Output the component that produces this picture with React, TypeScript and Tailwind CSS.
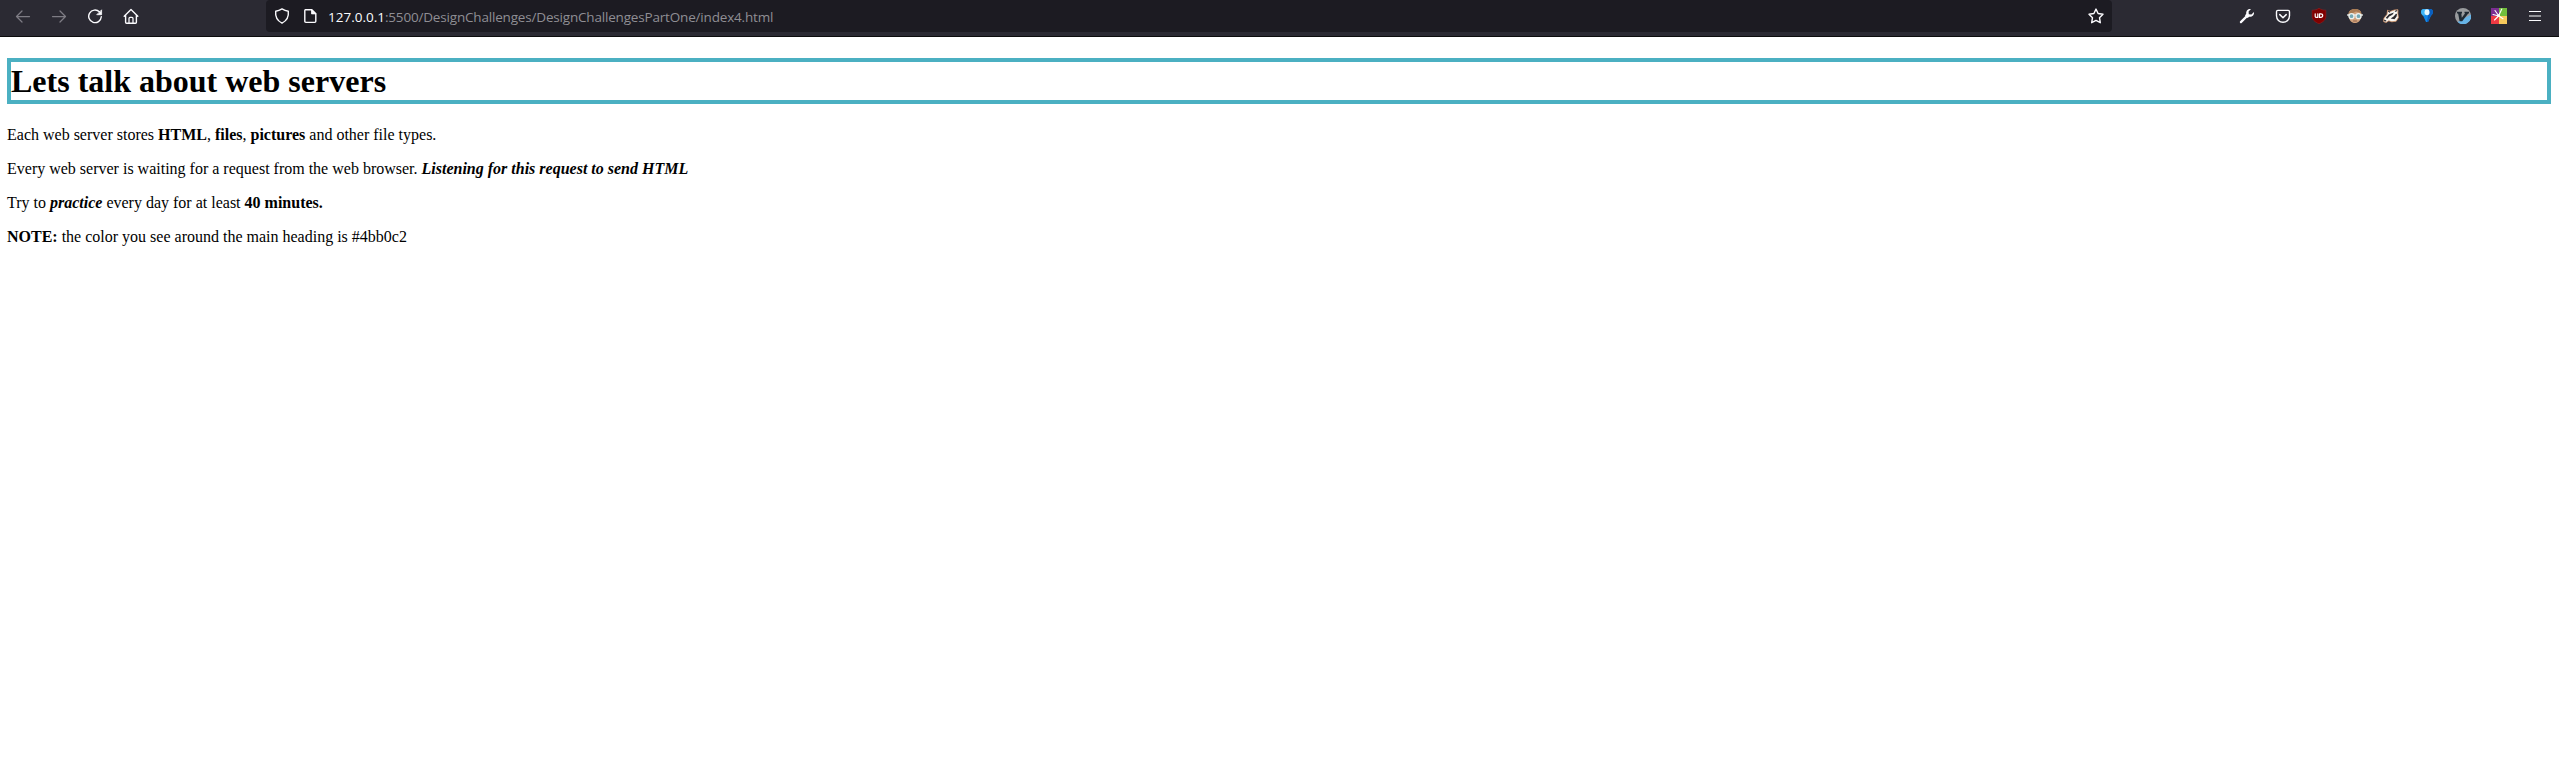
import type { ReactNode } from "react";

function Icon({ children, className = "" }: { children: ReactNode; className?: string }) {
  return (
    <svg
      viewBox="0 0 16 16"
      className={`size-4 shrink-0 ${className}`}
      fill="none"
      stroke="currentColor"
      strokeWidth="1.25"
      strokeLinecap="round"
      strokeLinejoin="round"
    >
      {children}
    </svg>
  );
}

function Navigation() {
  return (
    <div className="flex w-[266px] shrink-0 items-center gap-5 pl-[15px] text-[#fbfbfe]">
      <Icon className="text-[#7e7c84]"><path d="M14.5 8.5H1.5M7 3 1.5 8.5 7 14" /></Icon>
      <Icon className="text-[#7e7c84]"><path d="M1.5 8.5h13M9 3l5.5 5.5L9 14" /></Icon>
      <Icon>
        <path d="M12.4 3.8A6.3 6.3 0 1 0 14.3 8.8" strokeWidth="1.4" />
        <path d="M14.6 2.2v4.5h-4.5z" fill="currentColor" strokeWidth="0.8" />
      </Icon>
      <Icon>
        <path d="M1.2 8.2 8 1.6l6.8 6.6M2.6 7v7.3q0 .9.9.9h9q.9 0 .9-.9V7" strokeWidth="1.4" />
        <path d="M6 14.8V10.4q0-1 1-1h2q1 0 1 1v4.4" />
      </Icon>
    </div>
  );
}

function AddressBar() {
  return (
    <div className="flex h-8 w-[1846px] shrink-0 items-center rounded bg-[#1c1b22] px-2 text-[#fbfbfe]">
      <Icon><path d="M8 .9Q11 2.8 14.3 3.2C14.9 8.5 12.8 12.8 8 15.2 3.2 12.8 1.1 8.5 1.7 3.2Q5 2.8 8 .9z" strokeWidth="1.4" /></Icon>
      <Icon className="ml-3">
        <path d="M3.4 1.7h6.4l4 4v7.6q0 1.1-1.1 1.1H3.9q-1.1 0-1.1-1.1V2.8q0-1.1.6-1.1z" strokeWidth="1.4" />
        <path d="M9.5 1.7v4.2h4.2z" fill="currentColor" strokeWidth="0.8" />
      </Icon>
      <span className="ml-2.5 mt-px whitespace-nowrap font-['Open_Sans',sans-serif] text-[13.5px] leading-5">
        127.0.0.1<span className="tracking-[-0.18px] text-[#8f8e94]">:5500/DesignChallenges/DesignChallengesPartOne/index4.html</span>
      </span>
      <Icon className="ml-auto">
        <path d="m8 1.1 2.1 4.4 4.9.7-3.5 3.5.8 5L8 12.4l-4.3 2.3.8-5L1 6.2l4.9-.7z" strokeWidth="1.4" />
      </Icon>
    </div>
  );
}

function Extensions() {
  return (
    <div className="ml-auto flex items-center gap-5 pr-4 text-[#fbfbfe]">
      <Icon>
        <path d="m1.9 14.1 6-6" strokeWidth="2.2" />
        <path d="M12 1C9 .6 6.8 2.8 7.2 5.7L6 7.4l2.6 2.6 1.7-1.2c2.9.4 5.1-1.8 4.7-4.8L12.4 6.4 9.8 6.2l-.2-2.6z" fill="currentColor" stroke="none" />
      </Icon>
      <Icon>
        <path d="M2.8 2.4h10.4q1.3 0 1.3 1.3v4.1a6.5 6.5 0 0 1-13 0V3.7q0-1.3 1.3-1.3z" strokeWidth="1.4" />
        <path d="M4.8 6.6 8 9.7l3.2-3.1" strokeWidth="1.5" />
      </Icon>
      <Icon>
        <path d="M8 .2c2 1.4 4.2 2 6.9 2V8c0 3.6-2.4 5.8-6.9 7.8C3.5 13.8 1.1 11.6 1.1 8V2.2c2.7 0 4.9-.6 6.9-2z" fill="#800000" stroke="#9d2020" strokeWidth=".5" />
        <path d="M4.2 5.8v2.6q0 1 1.6 1h1V5.8M8.5 5.8h1.2q2 0 2 1.8t-2 1.8H8.5z" stroke="#fff" strokeWidth="1.2" />
      </Icon>
      <Icon>
        <path d="M1.6 8C.8 3.4 3.6.9 8 .9s7.2 2.5 6.4 7.1c-.6 4.4-3 7-6.4 7S2.200 12.400 1.600 8z" fill="#d0a17b" stroke="none" />
        <path d="M1.5 7C1.500 3 4 .9 8 .9S14.500 3 14.500 7L12.500 4.500 9 3.500 6 5z" fill="#a97b53" stroke="none" />
        <path d="M.5 7h15" stroke="#dce2df" strokeWidth="1.500" />
        <circle cx="4.5" cy="8.2" r="2.500" fill="#74a8b4" stroke="#eef2ef" strokeWidth="1.300" />
        <circle cx="11.500" cy="8.2" r="2.500" fill="#74a8b4" stroke="#eef2ef" strokeWidth="1.300" />
        <path d="M6.500 13h3" stroke="#82503d" strokeWidth=".8" />
      </Icon>
      <Icon>
        <path d="M.6 13.200 1 10 4 6.400 4.600 2.200 7.300 3.400l4-1.400L15 1.800l-.2 3.400.6 4.400-2.200 3.600-4.400.6-3-1-2.600 1.600z" fill="#faf7f3" stroke="#d59668" strokeWidth=".8" />
        <path d="M2.600 10 6 6.200l5-1.600-1.600 2.200-3.200 1.700-1.700 2.200z" fill="#2b292d" stroke="none" />
        <path d="m7.600 10.600 3-2.100 2.400-2.800 1 .2-.4 2.600-2.100 2.700z" fill="#2b292d" stroke="none" />
        <path d="m5.600 3.200 1 .8M12.400 3.200l1.400-.5M1.400 12.300l1.300.6" stroke="#2b292d" strokeWidth="1.200" />
      </Icon>
      <Icon>
        <path d="M2 4Q2.200 1 5 1h6q2.800 0 3 3 0 2-2.200 4L9 14H7L4.200 8Q2 6 2 4z" fill="#1286e6" stroke="none" />
        <path d="M2 4Q2.200 1 5 1h2.500L6 7.500H3.900Q2 6 2 4z" fill="#3eb5f7" stroke="none" />
        <path d="M10 1h1q2.800 0 3 3 0 2-2.200 4L9 14H8z" fill="#0a5fc0" stroke="none" />
        <ellipse cx="8" cy="4.200" rx="2.500" ry="3" fill="#e6f8ff" stroke="none" />
      </Icon>
      <Icon>
        <circle cx="8" cy="8" r="8" fill="#999b9e" stroke="none" />
        <path d="M16 6.500A8 8 0 0 1 2.600 13.900z" fill="#67b3e6" stroke="none" />
        <path d="M2 3.800h5v1.500l-.7.4.5 4 3.200-4.300-.5-.4V3.800H14v1.400l-1 .5-5.800 7.600H4.600L3.200 5.800 2 5.300z" fill="#202a34" stroke="none" />
      </Icon>
      <Icon>
        <path d="M0 0h8v8H0z" fill="#7b2f91" stroke="none" />
        <path d="M8 0h8v8H8z" fill="#72bd3c" stroke="none" />
        <path d="M0 8h8v8H0z" fill="#ee3a43" stroke="none" />
        <path d="M8 8h8v8H8z" fill="#f7c95c" stroke="none" />
        <path d="M7.500 7.500 4 2.500M8 7 10.800 1M7 7.800 2 6.500M7 8.500 3.500 12M8.300 8.300l3.700 2.400" stroke="#fff" strokeWidth="1.100" />
        <circle cx="7.600" cy="7.700" r="1.400" fill="#fff" stroke="none" />
      </Icon>
      <Icon><path d="M2 3.500h12M2 8h12M2 12.500h12" strokeWidth="1.200" strokeLinecap="butt" /></Icon>
    </div>
  );
}

export default function App() {
  return (
    <div className="min-h-[764px] bg-white">
      <header className="flex h-[37px] items-start border-b border-[#0c0c0d] bg-[#2b2a33] [&>div]:h-8">
        <Navigation />
        <AddressBar />
        <Extensions />
      </header>
      <main className="pl-[7px] pr-2 pt-[21px] font-['Liberation_Serif',serif] text-base leading-[18px] text-black">
        <h1 className="mb-[22px] h-[46px] border-4 border-[#4bb0c2] text-[32px] font-bold leading-[38px]">Lets talk about web servers</h1>
        <div className="flex flex-col gap-4">
          <p>Each web server stores <strong>HTML</strong>, <strong>files</strong>, <strong>pictures</strong> and other file types.</p>
          <p>Every web server is waiting for a request from the web browser. <strong><em>Listening for this request to send HTML</em></strong></p>
          <p>Try to <strong><em>practice</em></strong> every day for at least <strong>40 minutes.</strong></p>
          <p><strong>NOTE:</strong> the color you see around the main heading is #4bb0c2</p>
        </div>
      </main>
    </div>
  );
}
